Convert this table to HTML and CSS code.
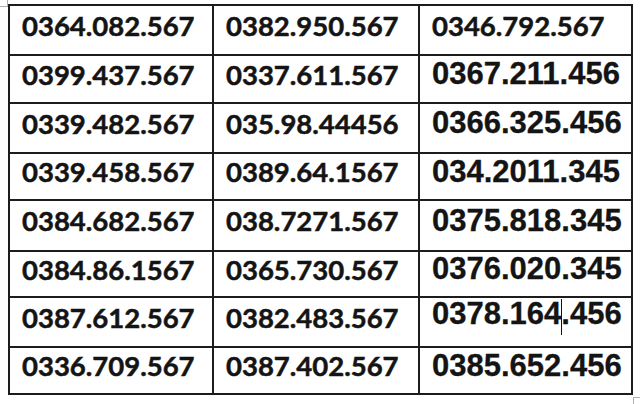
FILE: index.html
```html
<!DOCTYPE html>
<html>
<head>
<meta charset="utf-8">
<link rel="stylesheet" href="styles.css">
</head>
<body>
<div class="page">
  <span class="mark mark-tl"></span>
  <table class="phones">
    <colgroup><col class="c1"><col class="c2"><col class="c3"></colgroup>
    <tbody>
      <tr><td>0364.082.567</td><td>0382.950.567</td><td>0346.792.567</td></tr>
      <tr><td>0399.437.567</td><td>0337.611.567</td><td class="ar">0367.211.456</td></tr>
      <tr><td>0339.482.567</td><td>035.98.44456</td><td class="ar">0366.325.456</td></tr>
      <tr><td>0339.458.567</td><td>0389.64.1567</td><td class="ar">034.2011.345</td></tr>
      <tr><td>0384.682.567</td><td>038.7271.567</td><td class="ar">0375.818.345</td></tr>
      <tr><td>0384.86.1567</td><td>0365.730.567</td><td class="ar">0376.020.345</td></tr>
      <tr><td>0387.612.567</td><td>0382.483.567</td><td class="ar">0378.164<span class="caret"></span>.456</td></tr>
      <tr><td>0336.709.567</td><td>0387.402.567</td><td class="ar">0385.652.456</td></tr>
    </tbody>
  </table>
  <span class="mark mark-br"></span>
</div>
</body>
</html>
```

FILE: styles.css
```css
html, body {
  margin: 0;
  padding: 0;
  background: #ffffff;
}
.page {
  position: relative;
  width: 640px;
  height: 404px;
  overflow: hidden;
  padding: 4px 0 0 8px;
  box-sizing: border-box;
}
.phones {
  border-collapse: collapse;
  table-layout: fixed;
  width: 625px;
}
.c1 { width: 204px; }
.c2 { width: 206px; }
.c3 { width: 213px; }
.phones td {
  border: 2px solid #1c1c1c;
  padding: 0 0 9px 12px;
  vertical-align: middle;
  font-family: Lato, "Liberation Sans", sans-serif;
  font-weight: 700;
  font-size: 27.5px;
  color: #141414;
  -webkit-text-stroke: 0.5px #141414;
  white-space: nowrap;
  line-height: 1;
}
.phones td.ar {
  font-family: "Liberation Sans", Arial, sans-serif;
  font-size: 31px;
  -webkit-text-stroke: 0.3px #141414;
  padding-bottom: 11px;
}
.phones tr:nth-child(1) { height: 50px; }
.phones tr:nth-child(2) { height: 48px; }
.phones tr:nth-child(3) { height: 50px; }
.phones tr:nth-child(4) { height: 47px; }
.phones tr:nth-child(5) { height: 51px; }
.phones tr:nth-child(6) { height: 46px; }
.phones tr:nth-child(7) { height: 50px; }
.phones tr:nth-child(8) { height: 47px; }
.caret {
  display: inline-block;
  width: 0;
  height: 36px;
  border-left: 1px solid #111;
  vertical-align: -11px;
  margin: 0 -1px 0 0;
}
.mark {
  position: absolute;
  width: 7px;
  height: 6px;
  border-color: #b0b0b0;
  border-style: solid;
}
.mark-tl {
  left: 0;
  top: 0;
  border-width: 0 1px 1px 0;
}
.mark-br {
  left: 633px;
  top: 397px;
  border-width: 1px 0 0 1px;
}
```
